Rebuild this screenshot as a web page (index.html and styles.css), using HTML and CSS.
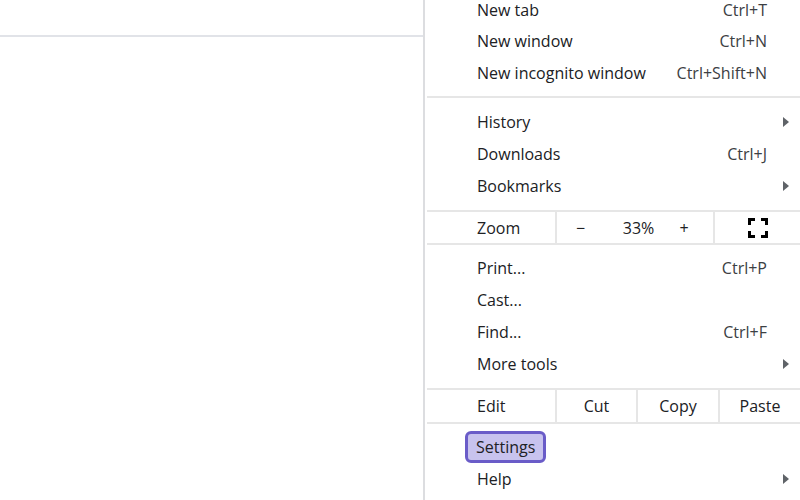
FILE: index.html
```html
<!DOCTYPE html>
<html lang="en">
<head>
  <meta charset="UTF-8">
  <title>Browser menu</title>
  <link rel="stylesheet" href="styles.css">
</head>
<body>
  <div class="page">
    <div class="toolbar"></div>
  </div>

  <div class="menu">
    <div class="group first">
      <div class="item cut-top"><span class="label">New tab</span><span class="key">Ctrl+T</span><span class="sub"></span></div>
      <div class="item"><span class="label">New window</span><span class="key">Ctrl+N</span><span class="sub"></span></div>
      <div class="item"><span class="label">New incognito window</span><span class="key">Ctrl+Shift+N</span><span class="sub"></span></div>
    </div>

    <div class="group">
      <div class="item">
        <span class="label">History</span><span class="key"></span>
        <span class="sub"><svg width="6" height="10" viewBox="0 0 6 10"><polygon points="0,0 6,5 0,10" /></svg></span>
      </div>
      <div class="item"><span class="label">Downloads</span><span class="key">Ctrl+J</span><span class="sub"></span></div>
      <div class="item">
        <span class="label">Bookmarks</span><span class="key"></span>
        <span class="sub"><svg width="6" height="10" viewBox="0 0 6 10"><polygon points="0,0 6,5 0,10" /></svg></span>
      </div>
    </div>

    <div class="split zoom-row">
      <div class="cell cell-label">Zoom</div>
      <div class="cell zoom-controls">
        <span>&minus;</span>
        <span>33%</span>
        <span>+</span>
      </div>
      <div class="cell cell-full">
        <svg width="20" height="20" viewBox="0 0 20 20" fill="none" stroke="#000" stroke-width="3">
          <path d="M1.5 7V1.5H7" />
          <path d="M13 1.5H18.5V7" />
          <path d="M18.5 13V18.5H13" />
          <path d="M7 18.5H1.5V13" />
        </svg>
      </div>
    </div>

    <div class="group tools">
      <div class="item"><span class="label">Print...</span><span class="key">Ctrl+P</span><span class="sub"></span></div>
      <div class="item"><span class="label">Cast...</span><span class="key"></span><span class="sub"></span></div>
      <div class="item"><span class="label">Find...</span><span class="key">Ctrl+F</span><span class="sub"></span></div>
      <div class="item">
        <span class="label">More tools</span><span class="key"></span>
        <span class="sub"><svg width="6" height="10" viewBox="0 0 6 10"><polygon points="0,0 6,5 0,10" /></svg></span>
      </div>
    </div>

    <div class="split edit-row">
      <div class="cell cell-label">Edit</div>
      <div class="cell cell-btn">Cut</div>
      <div class="cell cell-btn">Copy</div>
      <div class="cell cell-btn">Paste</div>
    </div>

    <div class="group last">
      <div class="item"><span class="label"><span class="focused">Settings</span></span><span class="key"></span><span class="sub"></span></div>
      <div class="item">
        <span class="label">Help</span><span class="key"></span>
        <span class="sub"><svg width="6" height="10" viewBox="0 0 6 10"><polygon points="0,0 6,5 0,10" /></svg></span>
      </div>
    </div>
  </div>
</body>
</html>
```

FILE: styles.css
```css
* {
  margin: 0;
  padding: 0;
  box-sizing: border-box;
}

body {
  font-family: "Open Sans", "Noto Sans", sans-serif;
  font-size: 16px;
  color: #202124;
  background-color: #ffffff;
  display: flex;
  width: 800px;
  height: 500px;
  overflow: hidden;
}

/* page behind the menu */
.page {
  width: 423px;
  flex-shrink: 0;
}

.toolbar {
  height: 37px;
  border-bottom: 2px solid #e1e3e8;
}

/* the menu itself */
.menu {
  flex: 1;
  border-left: 2px solid #dcdde0;
  padding-left: 2px;
}

.group {
  padding: 8px 0;
  border-top: 2px solid #e6e6e6;
}

.group.first {
  border-top: none;
  padding-top: 0;
  padding-bottom: 7px;
}

.group.tools {
  padding-top: 7px;
}

.group.last {
  padding-top: 7px;
}

.item {
  display: flex;
  align-items: center;
  height: 32px;
  padding: 0 11px 0 50px;
}

/* first row is scrolled partly out of view */
.item.cut-top {
  height: 25px;
  align-items: flex-start;
  line-height: 21px;
}

.label {
  flex: 1;
  white-space: nowrap;
}

.key {
  color: #3c4043;
}

.sub {
  width: 6px;
  margin-left: 16px;
  display: flex;
  align-items: center;
}

.sub svg {
  fill: #5f6368;
}

.focused {
  display: inline-block;
  margin-left: -12px;
  padding: 0 8px;
  line-height: 26px;
  border: 3px solid #6a5cc8;
  border-radius: 6px;
  background-color: #c8c3ee;
}

/* zoom / edit rows split in cells */
.split {
  display: flex;
  border-top: 2px solid #e6e6e6;
}

.cell {
  display: flex;
  align-items: center;
  justify-content: center;
  height: 32px;
}

.zoom-row .cell {
  height: 31px;
}

.cell + .cell {
  border-left: 2px solid #e6e6e6;
}

.cell-label {
  width: 128px;
  justify-content: flex-start;
  padding-left: 50px;
}

.zoom-controls {
  width: 158px;
  display: grid;
  grid-template-columns: 47px 69px 22px;
  justify-content: start;
  text-align: center;
  align-items: center;
}

.cell-full {
  flex: 1;
}

.cell-btn {
  flex: 1;
}

.edit-row .cell-btn:nth-child(2) {
  flex: 0 0 81px;
}

.edit-row .cell-btn:nth-child(3) {
  flex: 0 0 82px;
}
```
